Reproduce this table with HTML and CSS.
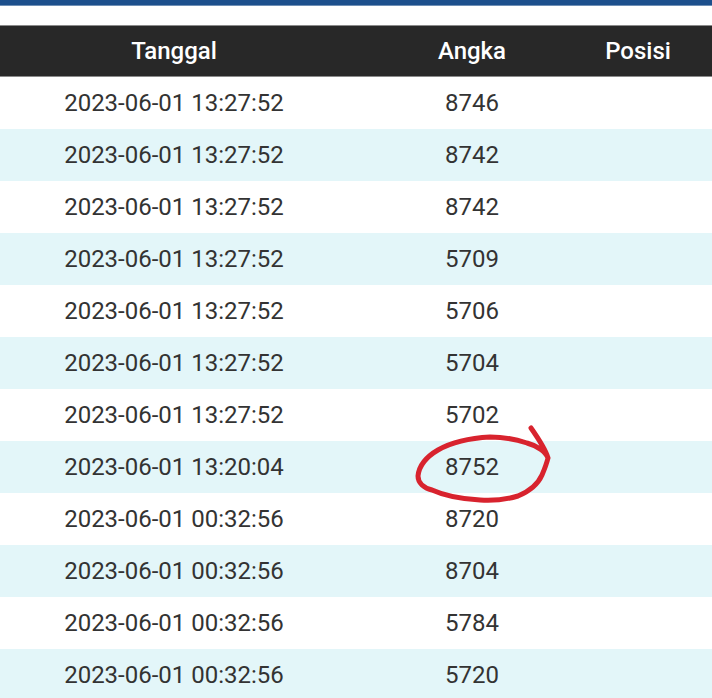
FILE: index.html
```html
<!DOCTYPE html>
<html>
<head>
<meta charset="utf-8">
<link rel="stylesheet" href="styles.css">
</head>
<body>
<div class="topbar"></div>
<div class="wrap">
  <div class="table">
    <div class="row head"><div class="c1">Tanggal</div><div class="c2">Angka</div><div class="c3">Posisi</div></div>
    <div class="row"><div class="c1">2023-06-01 13:27:52</div><div class="c2">8746</div><div class="c3"></div></div>
    <div class="row alt"><div class="c1">2023-06-01 13:27:52</div><div class="c2">8742</div><div class="c3"></div></div>
    <div class="row"><div class="c1">2023-06-01 13:27:52</div><div class="c2">8742</div><div class="c3"></div></div>
    <div class="row alt"><div class="c1">2023-06-01 13:27:52</div><div class="c2">5709</div><div class="c3"></div></div>
    <div class="row"><div class="c1">2023-06-01 13:27:52</div><div class="c2">5706</div><div class="c3"></div></div>
    <div class="row alt"><div class="c1">2023-06-01 13:27:52</div><div class="c2">5704</div><div class="c3"></div></div>
    <div class="row"><div class="c1">2023-06-01 13:27:52</div><div class="c2">5702</div><div class="c3"></div></div>
    <div class="row alt"><div class="c1">2023-06-01 13:20:04</div><div class="c2">8752</div><div class="c3"></div></div>
    <div class="row"><div class="c1">2023-06-01 00:32:56</div><div class="c2">8720</div><div class="c3"></div></div>
    <div class="row alt"><div class="c1">2023-06-01 00:32:56</div><div class="c2">8704</div><div class="c3"></div></div>
    <div class="row"><div class="c1">2023-06-01 00:32:56</div><div class="c2">5784</div><div class="c3"></div></div>
    <div class="row alt"><div class="c1">2023-06-01 00:32:56</div><div class="c2">5720</div><div class="c3"></div></div>
  </div>
  <svg class="scribble" width="712" height="698" viewBox="0 0 712 698">
    <path d="M531 428 C538 438 545 448 548 458 C546 452 538 446 527 443 C515 439 505 437 490 437 C470 438 452 442 438 450 C426 457 419 466 418 476 C418 483 424 488 432 490 C445 496 462 499 480 500 C495 501 508 499 518 496 C530 491 538 484 542 475 C545 468 547 462 548 458" fill="none" stroke="#d8232e" stroke-width="5" stroke-linecap="round" stroke-linejoin="round"/>
  </svg>
</div>
</body>
</html>
```

FILE: styles.css
```css
html, body {
  margin: 0;
  padding: 0;
  background: #ffffff;
  font-family: Roboto, "Noto Sans", sans-serif;
  overflow: hidden;
}
.topbar {
  height: 5px;
  background: #1c4f8c;
  border-bottom: 1px solid #6f8fb5;
}
.wrap {
  position: relative;
  padding-top: 19px;
}
.table {
  display: flex;
  flex-direction: column;
}
.row {
  display: grid;
  grid-template-columns: 348px 248px 84px 1fr;
  height: 52px;
  align-items: center;
  font-size: 24px;
  color: #333333;
  background: #ffffff;
}
.row.alt {
  background: #e3f6f9;
}
.row > div {
  text-align: center;
  white-space: nowrap;
}
.row.head {
  background: #282828;
  color: #ffffff;
  font-weight: 500;
  border-top: 1px solid #8a8a8a;
  border-bottom: 1px solid #8a8a8a;
  height: 50px;
}
.scribble {
  position: absolute;
  left: 0;
  top: -6px;
  pointer-events: none;
}
```
